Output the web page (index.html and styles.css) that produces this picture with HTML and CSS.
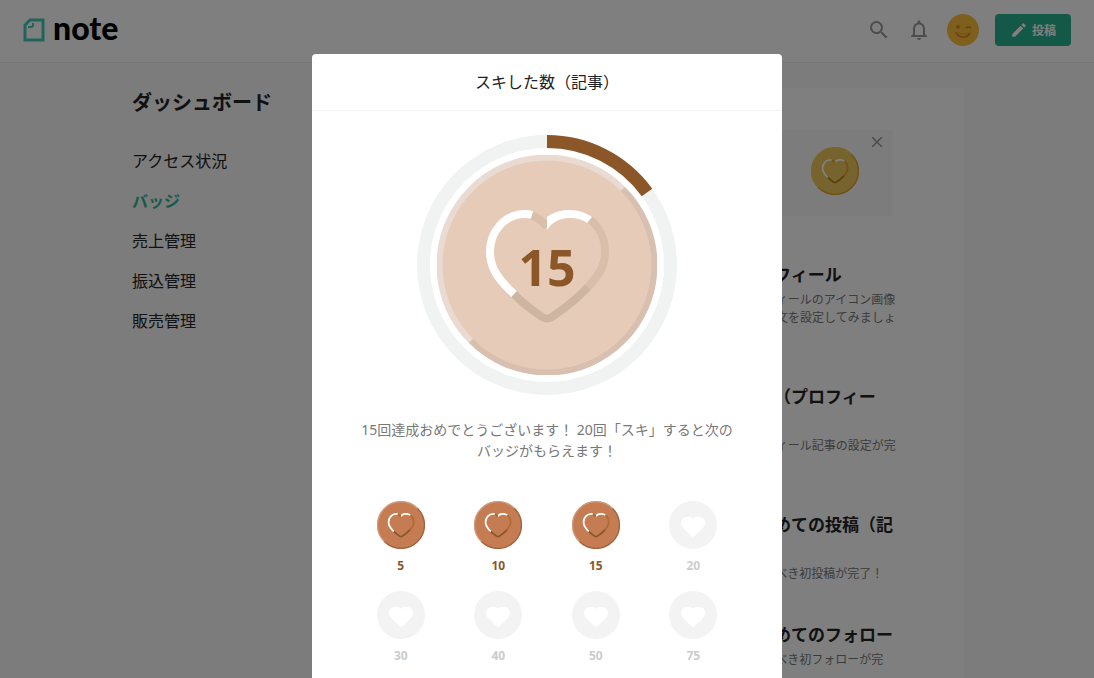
FILE: index.html
```html
<!DOCTYPE html>
<html lang="ja">
<head>
  <meta charset="UTF-8" />
  <meta name="viewport" content="width=device-width, initial-scale=1.0"/>
  <title>バッジ - note</title>
  <link rel="stylesheet" href="styles.css">
</head>
<body>
  <svg class="sprite" aria-hidden="true">
    <symbol id="coin" viewBox="20 20 220 220">
      <circle class="coin-face" cx="130" cy="130" r="109"/>
      <path class="coin-rim-light" d="M54 206A107 107 0 0 1 206 54"/>
      <path class="coin-rim-dark" d="M206 54A107 107 0 0 1 54 206"/>
      <path class="heart-shade" d="M114 80C121 83 126 86 130 92"/>
      <path class="heart-shade" d="M172 84C182 91 188 103 188 117C188 132 181 141 171 152"/>
      <path class="heart-dark" d="M171 152C162 162 148 173 135 182Q130 185 125 182C115 175 105 168 97 159"/>
      <path class="heart-light" d="M97 159C84 147 73 135 73 117C73 96 88 79 108 79Q112 79 115 80"/>
      <path class="heart-light-fill" d="M130 95V82C138 76 146 75 152 75C162 75 169 78 175 82L170 88C165 84 159 83 152 83C143 83 135 87 130 95Z"/>
    </symbol>
    <symbol id="locked" viewBox="0 0 48 48">
      <circle cx="24" cy="24" r="24" fill="#f3f3f3"/>
      <path d="M24 36Q22 35 15 28Q12 25 12 22Q12 16 18 16Q22 15 24 18Q26 15 30 16Q36 16 36 22Q36 25 33 28Q26 35 24 36Z" fill="#fff"/>
    </symbol>
  </svg>

  <header class="header">
    <a class="logo" href="#" aria-label="note">
      <svg width="22" height="24" viewBox="0 0 22 24" fill="none" stroke="#41c9b4">
        <path d="M7 2H20V22H2V7Z" stroke-width="3"/>
        <path d="M10 5V7Q10 9 8 9H5" stroke-width="2"/>
      </svg>
      <span>note</span>
    </a>
    <div class="header-menu">
      <button class="icon-btn" aria-label="検索">
        <svg width="24" height="24" viewBox="0 0 24 24" fill="#999"><path d="M15.500 14h-.79l-.28-.27A6.470 6.470 0 0 0 16 9.500 6.500 6.500 0 1 0 9.500 16c1.610 0 3.090-.59 4.230-1.570l.27.28v.79l5 4.990L20.490 19l-4.990-5zm-6 0C7.010 14 5 11.990 5 9.500S7.010 5 9.500 5 14 7.010 14 9.500 11.990 14 9.500 14z"/></svg>
      </button>
      <button class="icon-btn" aria-label="通知">
        <svg width="24" height="24" viewBox="0 0 24 24" fill="#999"><path d="M12 22c1.100 0 2-.9 2-2h-4c0 1.100.9 2 2 2zm6-6v-5c0-3.070-1.630-5.640-4.500-6.320V4c0-.83-.67-1.500-1.500-1.500s-1.500.67-1.500 1.500v.68C7.640 5.360 6 7.920 6 11v5l-2 2v1h16v-1l-2-2zm-2 1H8v-6c0-2.480 1.510-4.500 4-4.500s4 2.020 4 4.500v6z"/></svg>
      </button>
      <button class="icon-btn" aria-label="アカウント">
        <svg width="32" height="32" viewBox="0 0 32 32">
          <circle cx="16" cy="16" r="16" fill="#ffbe3c"/>
          <ellipse cx="11" cy="13" rx="2" ry="2" fill="#e08a1e"/>
          <path d="M19 14Q21 12 24 14" fill="none" stroke="#e08a1e" stroke-width="2"/>
          <path d="M9 18Q11 23 16 23Q21 23 23 19" fill="none" stroke="#e08a1e" stroke-width="2"/>
          <path d="M11 19Q16 21 21 19" fill="none" stroke="#e9a02c" stroke-width="1"/>
        </svg>
      </button>
      <button class="post-btn">
        <svg width="18" height="18" viewBox="0 0 24 24" fill="#fff"><path d="M3 17.250V21h3.750L17.810 9.940l-3.750-3.750L3 17.250zM20.710 7.040c.39-.39.39-1.020 0-1.410l-2.340-2.340a1 1 0 0 0-1.410 0l-1.830 1.830 3.750 3.750 1.830-1.830z"/></svg>
        投稿
      </button>
    </div>
  </header>

  <div class="layout">
    <nav class="sidebar">
      <h1>ダッシュボード</h1>
      <a href="#">アクセス状況</a>
      <a href="#" class="active">バッジ</a>
      <a href="#">売上管理</a>
      <a href="#">振込管理</a>
      <a href="#">販売管理</a>
    </nav>
    <main class="content">
      <div class="banner">
        <svg class="coin gold"><use href="#coin"/></svg>
        <button class="close-btn" aria-label="閉じる">
          <svg width="10" height="10" viewBox="0 0 10 10" stroke="#999" stroke-width="1.500"><path d="M0 0L10 10M10 0L0 10"/></svg>
        </button>
      </div>
      <ul class="badge-list">
        <li>
          <h2>プロフィール</h2>
          <p>プロフィールのアイコン画像と紹介文を設定してみましょう！</p>
        </li>
        <li>
          <h2>記事（プロフィール）</h2>
          <p>プロフィール記事の設定が完了！</p>
        </li>
        <li>
          <h2>はじめての投稿（記事）</h2>
          <p>記念すべき初投稿が完了！</p>
        </li>
        <li>
          <h2>はじめてのフォロー</h2>
          <p>記念すべき初フォローが完了！</p>
        </li>
      </ul>
    </main>
  </div>

  <div class="overlay">
    <div class="modal" role="dialog" aria-labelledby="modalTitle">
      <h2 class="modal-title" id="modalTitle">スキした数（記事）</h2>
      <div class="progress">
        <svg class="progress-ring" viewBox="0 0 260 260">
          <circle cx="130" cy="130" r="123.500" fill="none" stroke="#f1f3f3" stroke-width="13"/>
          <path d="M130 6.500A123.500 123.500 0 0 1 230 57.500" fill="none" stroke="#8b5729" stroke-width="13"/>
        </svg>
        <svg class="coin pale"><use href="#coin"/></svg>
        <span class="progress-count">15</span>
      </div>
      <p class="modal-text">15回達成おめでとうございます！ 20回「スキ」すると次のバッジがもらえます！</p>
      <ul class="steps">
        <li class="done"><svg class="coin bronze"><use href="#coin"/></svg>5</li>
        <li class="done"><svg class="coin bronze"><use href="#coin"/></svg>10</li>
        <li class="done"><svg class="coin bronze"><use href="#coin"/></svg>15</li>
        <li><svg class="coin"><use href="#locked"/></svg>20</li>
        <li><svg class="coin"><use href="#locked"/></svg>30</li>
        <li><svg class="coin"><use href="#locked"/></svg>40</li>
        <li><svg class="coin"><use href="#locked"/></svg>50</li>
        <li><svg class="coin"><use href="#locked"/></svg>75</li>
      </ul>
    </div>
  </div>
</body>
</html>
```
FILE: styles.css
```css
* {
  box-sizing: border-box;
}

body {
  margin: 0;
  overflow: hidden;
  background: #f8f8f8;
  color: #222;
  font-family: "Noto Sans", "Noto Sans CJK JP", sans-serif;
  font-size: 16px;
}

h1, h2, p, ul {
  margin: 0;
  padding: 0;
}

ul {
  list-style: none;
}

a {
  color: inherit;
  text-decoration: none;
}

button {
  display: flex;
  align-items: center;
  padding: 0;
  border: none;
  background: none;
  font-family: inherit;
  cursor: pointer;
}

.sprite {
  display: none;
}

/* header */
.header {
  display: flex;
  align-items: flex-start;
  justify-content: space-between;
  height: 63px;
  padding: 0 23px;
  background: #fff;
  border-bottom: 1px solid #eee;
}

.logo {
  display: flex;
  align-items: center;
  gap: 8px;
  height: 60px;
  color: #000;
  font-family: Lato, sans-serif;
  font-size: 32px;
  font-weight: 900;
  line-height: 32px;
}

.logo span {
  padding-bottom: 4px;
}

.header-menu {
  display: flex;
  align-items: center;
  gap: 16px;
  height: 60px;
}

.post-btn {
  justify-content: center;
  gap: 4px;
  width: 76px;
  height: 32px;
  border-radius: 4px;
  background: #28b28f;
  color: #fff;
  font-size: 12px;
  font-weight: bold;
}

/* dashboard */
.layout {
  display: flex;
  justify-content: space-between;
  max-width: 834px;
  margin: 0 auto;
  padding-top: 25px;
}

.sidebar {
  display: flex;
  flex-direction: column;
  width: 200px;
  padding: 1px 0 0 2px;
  line-height: 40px;
}

.sidebar h1 {
  margin-bottom: 24px;
  font-size: 20px;
  line-height: 28px;
}

.sidebar .active {
  color: #2cb696;
  font-weight: bold;
}

.content {
  flex: 1;
  max-width: 630px;
  padding: 42px 64px 0;
  background: #fff;
}

.banner {
  display: flex;
  align-items: flex-start;
  justify-content: flex-end;
  gap: 13px;
  height: 86px;
  margin: 0 7px 47px;
  padding: 7px 11px;
  background: #f8f8f8;
}

.banner .coin {
  margin-top: 10px;
}

.badge-list {
  display: flex;
  flex-direction: column;
  align-items: flex-end;
  gap: 40px;
}

.badge-list li {
  width: 160px;
}

.badge-list h2 {
  margin-bottom: 4px;
  font-size: 17px;
  line-height: 24px;
}

.badge-list p {
  color: #787878;
  font-size: 12px;
  line-height: 18px;
}

/* coins */
.coin {
  display: block;
  width: 48px;
  height: 48px;
}

.coin-face {
  fill: var(--face);
}

.coin-rim-light, .coin-rim-dark {
  fill: none;
  stroke: var(--rim-light);
  stroke-width: 6;
}

.coin-rim-dark {
  stroke: var(--rim-dark);
}

.heart-light, .heart-shade, .heart-dark {
  fill: none;
  stroke: #fff;
  stroke-width: 8;
}

.heart-shade {
  stroke: var(--shade);
}

.heart-dark {
  stroke: var(--dark);
}

.heart-light-fill {
  fill: #fff;
}

.pale {
  --face: #e7cbb9;
  --rim-light: #e9dad2;
  --rim-dark: #d8bfb0;
  --shade: #d9bfaa;
  --dark: #ceb5a2;
}

.bronze {
  --face: #c57c53;
  --rim-light: #d09a7c;
  --rim-dark: #a0643f;
  --shade: #b06c2c;
  --dark: #8b5729;
}

.gold {
  --face: #ecc75a;
  --rim-light: #f0cc50;
  --rim-dark: #e0a020;
  --shade: #e3a52c;
  --dark: #b87a18;
}

/* modal */
.overlay {
  position: fixed;
  inset: 0;
  padding-top: 54px;
  overflow: hidden;
  background: rgba(0, 0, 0, 0.5);
}

.modal {
  max-width: 470px;
  margin: 0 auto;
  padding-bottom: 40px;
  border-radius: 4px;
  background: #fff;
}

.modal-title {
  height: 57px;
  border-bottom: 1px solid #f3f3f3;
  font-size: 16px;
  font-weight: normal;
  line-height: 57px;
  text-align: center;
}

.progress {
  display: grid;
  place-items: center;
  padding: 24px 0;
}

.progress > * {
  grid-area: 1 / 1;
}

.progress-ring {
  width: 260px;
  height: 260px;
}

.progress .coin {
  width: 220px;
  height: 220px;
}

.progress-count {
  padding-top: 4px;
  color: #8b5729;
  font-size: 50px;
  font-weight: bold;
  line-height: 60px;
}

.modal-text {
  padding: 0 48px;
  color: #787878;
  font-size: 14px;
  line-height: 21px;
  text-align: center;
}

.steps {
  display: grid;
  grid-template-columns: repeat(4, 1fr);
  row-gap: 16px;
  padding: 40px 40px 0;
  color: #ccc;
  font-size: 12px;
  font-weight: bold;
  line-height: 18px;
  text-align: center;
}

.steps .coin {
  margin: 0 auto 8px;
}

.steps .done {
  color: #8b5729;
}
```
